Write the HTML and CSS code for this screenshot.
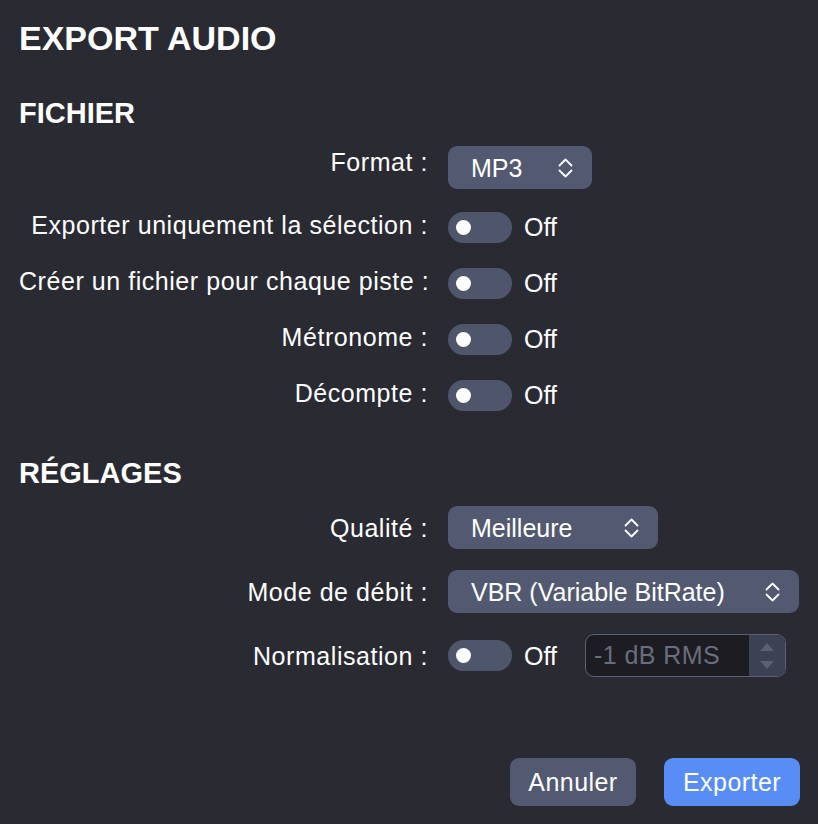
FILE: index.html
```html
<!DOCTYPE html>
<html lang="fr">
<head>
<meta charset="utf-8">
<title>Export audio</title>
<link rel="stylesheet" href="styles.css">
</head>
<body>
<div class="dialog">
  <h1 class="title">EXPORT AUDIO</h1>

  <h2 class="section section-first">FICHIER</h2>
  <div class="form">
    <div class="row row-select">
      <div class="label label-up-lg">Format :</div>
      <div class="controls">
        <div class="select w-format"><span>MP3</span>
          <svg class="chev" viewBox="0 0 15 22" width="15" height="22"><path d="M1.5 8.5 L7.5 2.5 L13.5 8.5 M1.5 13.5 L7.5 19.5 L13.5 13.5"/></svg>
        </div>
      </div>
    </div>
    <div class="row row-toggle">
      <div class="label label-up">Exporter uniquement la sélection :</div>
      <div class="controls"><div class="toggle"><span class="knob"></span></div><span class="state">Off</span></div>
    </div>
    <div class="row row-toggle">
      <div class="label label-up">Créer un fichier pour chaque piste :</div>
      <div class="controls"><div class="toggle"><span class="knob"></span></div><span class="state">Off</span></div>
    </div>
    <div class="row row-toggle">
      <div class="label label-up">Métronome :</div>
      <div class="controls"><div class="toggle"><span class="knob"></span></div><span class="state">Off</span></div>
    </div>
    <div class="row row-toggle">
      <div class="label label-up">Décompte :</div>
      <div class="controls"><div class="toggle"><span class="knob"></span></div><span class="state">Off</span></div>
    </div>
  </div>

  <h2 class="section section-second">RÉGLAGES</h2>
  <div class="form form-settings">
    <div class="row row-select">
      <div class="label">Qualité :</div>
      <div class="controls">
        <div class="select w-quality"><span>Meilleure</span>
          <svg class="chev" viewBox="0 0 15 22" width="15" height="22"><path d="M1.5 8.5 L7.5 2.5 L13.5 8.5 M1.5 13.5 L7.5 19.5 L13.5 13.5"/></svg>
        </div>
      </div>
    </div>
    <div class="row row-select">
      <div class="label">Mode de débit :</div>
      <div class="controls">
        <div class="select w-mode"><span>VBR (Variable BitRate)</span>
          <svg class="chev" viewBox="0 0 15 22" width="15" height="22"><path d="M1.5 8.5 L7.5 2.5 L13.5 8.5 M1.5 13.5 L7.5 19.5 L13.5 13.5"/></svg>
        </div>
      </div>
    </div>
    <div class="row row-select">
      <div class="label">Normalisation :</div>
      <div class="controls">
        <div class="toggle"><span class="knob"></span></div><span class="state">Off</span>
        <div class="number">
          <span class="number-text">-1 dB RMS</span>
          <div class="stepper">
            <svg viewBox="0 0 14 8" width="14" height="8"><path d="M0 8 L7 0 L14 8 Z"/></svg>
            <svg viewBox="0 0 14 8" width="14" height="8"><path d="M0 0 L7 8 L14 0 Z"/></svg>
          </div>
        </div>
      </div>
    </div>
  </div>

  <div class="footer">
    <button class="btn btn-secondary">Annuler</button>
    <button class="btn btn-primary">Exporter</button>
  </div>
</div>
</body>
</html>
```

FILE: styles.css
```css
html, body {
  margin: 0;
  padding: 0;
  background: #2a2a33;
}

body {
  font-family: "Liberation Sans", Arial, Helvetica, sans-serif;
  color: #ffffff;
}

.dialog {
  box-sizing: border-box;
  height: 824px;
  padding: 18px 18px 18px 19px;
  display: flex;
  flex-direction: column;
}

.title {
  margin: 0;
  font-size: 34px;
  line-height: 40px;
  font-weight: bold;
}

.section {
  margin: 0;
  font-size: 29px;
  line-height: 34px;
  font-weight: bold;
}

.section-first {
  margin-top: 38px;
  margin-bottom: 16px;
}

.section-second {
  margin-top: 33px;
  margin-bottom: 16px;
}

.form {
  display: flex;
  flex-direction: column;
}

.form-settings {
  gap: 21px;
}

.row {
  display: grid;
  grid-template-columns: 409px 1fr;
  column-gap: 20px;
  align-items: center;
}

.row-select {
  height: 43px;
}

.row-select + .row-toggle {
  margin-top: 10px;
}

.row-toggle {
  height: 56px;
}

.label {
  text-align: right;
  font-size: 25px;
  line-height: 30px;
  letter-spacing: 0.55px;
  white-space: nowrap;
}

.label-up {
  margin-bottom: 5px;
}

.label-up-lg {
  margin-bottom: 12px;
}

.controls {
  display: flex;
  align-items: center;
}

.select {
  box-sizing: border-box;
  height: 43px;
  padding: 0 19px 0 23px;
  border-radius: 9px;
  background: #535970;
  display: flex;
  align-items: center;
  justify-content: space-between;
  font-size: 25px;
  line-height: 30px;
}

.w-format { width: 144px; }
.w-quality { width: 210px; }
.w-mode { width: 351px; }

.chev {
  display: block;
  fill: none;
  stroke: #ffffff;
  stroke-width: 1.8;
  stroke-linecap: round;
  stroke-linejoin: round;
}

.toggle {
  box-sizing: border-box;
  width: 64px;
  height: 31px;
  border-radius: 16px;
  background: #4f556b;
  display: flex;
  align-items: center;
  padding-left: 8px;
}

.knob {
  width: 15px;
  height: 15px;
  border-radius: 50%;
  background: #ffffff;
}

.state {
  margin-left: 12px;
  font-size: 25px;
  line-height: 30px;
}

.number {
  box-sizing: border-box;
  margin-left: 28px;
  width: 201px;
  height: 43px;
  border: 1.5px solid #5b6078;
  border-radius: 9px;
  background: #1c1c22;
  overflow: hidden;
  display: flex;
}

.number-text {
  flex: 1;
  display: flex;
  align-items: center;
  padding-left: 8px;
  font-size: 25px;
  letter-spacing: 0.45px;
  color: #6a6d7e;
}

.stepper {
  width: 36px;
  background: #3d4154;
  display: flex;
  flex-direction: column;
  align-items: center;
  justify-content: center;
  gap: 10px;
}

.stepper svg {
  display: block;
  fill: #5b5f72;
}

.footer {
  margin-top: auto;
  display: flex;
  justify-content: flex-end;
  gap: 28px;
}

.btn {
  height: 48px;
  padding: 0 18px;
  border: none;
  border-radius: 9px;
  font-family: "Liberation Sans", Arial, Helvetica, sans-serif;
  font-size: 25px;
  letter-spacing: 0.45px;
  color: #ffffff;
}

.btn-secondary {
  width: 126px;
  background: #535970;
}

.btn-primary {
  width: 136px;
  background: #588df5;
}
```
